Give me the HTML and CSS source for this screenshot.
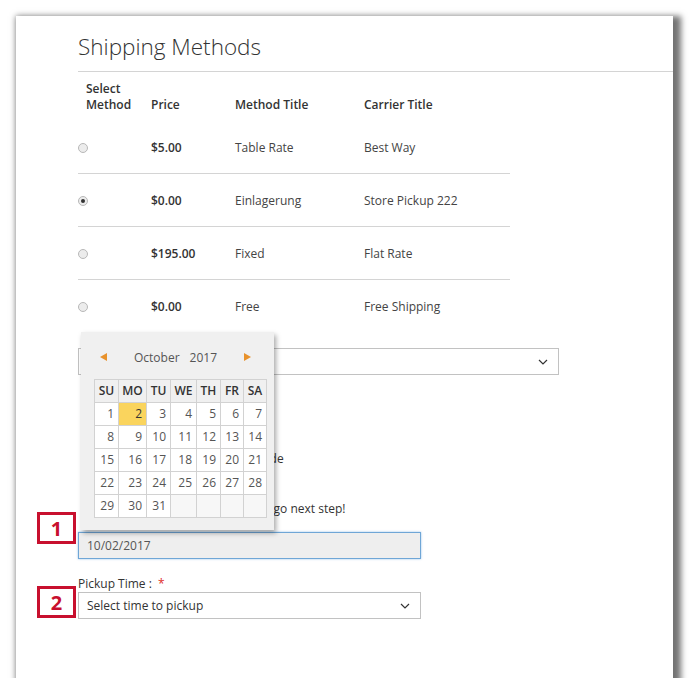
FILE: index.html
```html
<!DOCTYPE html>
<html lang="en">
<head>
<meta charset="utf-8">
<title>Shipping Methods</title>
<link rel="stylesheet" href="styles.css">
</head>
<body>
<div class="panel">
  <h2 class="title">Shipping Methods</h2>
  <div class="rule"></div>
  <div class="content">
    <table class="methods">
      <thead>
        <tr>
          <th class="c-sel">Select<br>Method</th>
          <th class="c-price">Price</th>
          <th class="c-method">Method Title</th>
          <th class="c-carrier">Carrier Title</th>
        </tr>
      </thead>
      <tbody>
        <tr>
          <td><span class="radio"></span></td>
          <td class="price">$5.00</td>
          <td>Table Rate</td>
          <td>Best Way</td>
        </tr>
        <tr>
          <td><span class="radio checked"></span></td>
          <td class="price">$0.00</td>
          <td>Einlagerung</td>
          <td>Store Pickup 222</td>
        </tr>
        <tr>
          <td><span class="radio"></span></td>
          <td class="price">$195.00</td>
          <td>Fixed</td>
          <td>Flat Rate</td>
        </tr>
        <tr>
          <td><span class="radio"></span></td>
          <td class="price">$0.00</td>
          <td>Free</td>
          <td>Free Shipping</td>
        </tr>
      </tbody>
    </table>

    <div class="select store-select">
      <span class="select-text">Store Pickup 222</span>
      <svg class="chev" width="10" height="6" viewBox="0 0 10 6"><polyline points="1,1 5,5 9,1" fill="none" stroke="#333" stroke-width="1.2"/></svg>
    </div>

    <div class="hint code-line">Please bring your order pickup code</div>
    <div class="hint notice">Please select the date and time to go next step!</div>

    <div class="date-input">10/02/2017</div>

    <div class="field-label">Pickup Time : &nbsp;<span class="req">*</span></div>
    <div class="select time-select">
      <span class="select-text">Select time to pickup</span>
      <svg class="chev" width="10" height="6" viewBox="0 0 10 6"><polyline points="1,1 5,5 9,1" fill="none" stroke="#333" stroke-width="1.2"/></svg>
    </div>
  </div>

  <div class="calendar">
    <div class="cal-head">
      <svg class="arrow" width="7" height="8" viewBox="0 0 7 8"><polygon points="7,0 7,8 0,4" fill="#e8922c"/></svg>
      <span class="cal-title"><span>October</span><span>2017</span></span>
      <svg class="arrow" width="7" height="8" viewBox="0 0 7 8"><polygon points="0,0 0,8 7,4" fill="#e8922c"/></svg>
    </div>
    <table class="cal">
      <thead>
        <tr><th class="w1">SU</th><th class="w2">MO</th><th class="w3">TU</th><th class="w4">WE</th><th class="w5">TH</th><th class="w6">FR</th><th class="w7">SA</th></tr>
      </thead>
      <tbody>
        <tr><td>1</td><td class="today">2</td><td>3</td><td>4</td><td>5</td><td>6</td><td>7</td></tr>
        <tr><td>8</td><td>9</td><td>10</td><td>11</td><td>12</td><td>13</td><td>14</td></tr>
        <tr><td>15</td><td>16</td><td>17</td><td>18</td><td>19</td><td>20</td><td>21</td></tr>
        <tr><td>22</td><td>23</td><td>24</td><td>25</td><td>26</td><td>27</td><td>28</td></tr>
        <tr><td>29</td><td>30</td><td>31</td><td class="empty"></td><td class="empty"></td><td class="empty"></td><td class="empty"></td></tr>
      </tbody>
    </table>
  </div>

  <div class="marker m1">1</div>
  <div class="marker m2">2</div>
</div>
</body>
</html>
```
FILE: styles.css
```css
html, body {
  margin: 0;
  padding: 0;
  background: #ffffff;
}
body {
  font-family: "Open Sans", "DejaVu Sans", sans-serif;
  font-size: 12px;
  color: #333;
}
.panel {
  position: relative;
  margin: 16px 0 0 16px;
  width: 657px;
  height: 662px;
  background: #fff;
  box-shadow: 4px 4px 6px 4px rgba(0, 0, 0, 0.55);
  padding-top: 16px;
  box-sizing: border-box;
}
.title {
  margin: 0 0 9px 62px;
  font-size: 22.5px;
  font-weight: 300;
  line-height: 30px;
  color: #333;
}
.rule {
  margin-left: 62px;
  border-top: 1px solid #d4d4d4;
}
.content {
  padding-left: 62px;
}
.methods {
  border-collapse: collapse;
  width: 432px;
  table-layout: fixed;
}
.methods th {
  text-align: left;
  font-weight: 600;
  line-height: 16px;
  padding: 9px 0 8px 0;
  vertical-align: bottom;
  color: #333;
}
.methods th.c-sel { width: 65px; padding-left: 8px; }
.methods th.c-price { width: 84px; }
.methods th.c-method { width: 129px; }
.methods th.c-carrier { width: 146px; }
.methods td {
  height: 50px;
  padding: 2px 0 0 0;
  vertical-align: middle;
  color: #444;
  border-bottom: 1px solid #d4d4d4;
  line-height: 16px;
}
.methods tbody tr:last-child td { border-bottom: none; }
.methods td.price { font-weight: 600; color: #333; }
.radio {
  display: inline-block;
  width: 8px;
  height: 8px;
  border: 1px solid #b8b8b8;
  border-radius: 50%;
  background: #ececec;
  vertical-align: middle;
  position: relative;
  top: -1px;
}
.radio.checked::after {
  content: "";
  position: absolute;
  left: 2px;
  top: 2px;
  width: 4px;
  height: 4px;
  border-radius: 50%;
  background: #333;
}
.select {
  display: flex;
  align-items: center;
  justify-content: space-between;
  height: 27px;
  box-sizing: border-box;
  border: 1px solid #c2c2c2;
  padding: 0 10px 0 8px;
  background: #fff;
}
.store-select {
  margin-top: 16px;
  width: 481px;
}
.select-text { color: #333; }
.hint {
  padding-left: 4px;
  line-height: 18px;
  color: #333;
}
.code-line { margin-top: 75px; }
.notice { margin-top: 32px; }
.field-label {
  line-height: 14px;
  color: #333;
  margin-top: 18px;
  margin-bottom: 1px;
}
.req { color: #e02b27; }
.date-input {
  margin-top: 14px;
  width: 343px;
  height: 27px;
  box-sizing: border-box;
  border: 1px solid #6fa6d6;
  box-shadow: 0 0 2px rgba(80, 150, 220, 0.6);
  background: #eeeeee;
  padding-left: 8px;
  line-height: 25px;
  color: #555;
}
.time-select { width: 343px; }

.calendar {
  position: absolute;
  left: 65px;
  top: 316px;
  width: 193px;
  height: 198px;
  background: #f0f0f0;
  box-shadow: 2px 3px 5px rgba(0, 0, 0, 0.35);
  padding: 13px 13px 0 13px;
  box-sizing: border-box;
}
.cal-head {
  display: flex;
  align-items: center;
  justify-content: space-between;
  height: 24px;
  padding: 0 10px 0 6px;
  margin-bottom: 10px;
}
.cal-title {
  display: flex;
  gap: 10px;
  color: #555;
  font-size: 12px;
}
.cal {
  border-collapse: collapse;
  table-layout: fixed;
  width: 165px;
}
.cal th, .cal td {
  border: 1px solid #d2d2d2;
  height: 22px;
  padding: 0;
  font-size: 12px;
  line-height: 14px;
}
.cal th {
  font-weight: 600;
  text-align: center;
  color: #333;
  background: #f0f0f0;
}
.cal td {
  text-align: right;
  padding-right: 4px;
  background: #fff;
  color: #555;
}
.cal td.today { background: #fad45d; color: #333; }
.cal td.empty { background: #f7f7f7; }
.cal .w1 { width: 23px; }
.cal .w2 { width: 27px; }
.cal .w3 { width: 23px; }
.cal .w4 { width: 25px; }
.cal .w5 { width: 23px; }
.cal .w6 { width: 22px; }
.cal .w7 { width: 22px; }

.marker {
  position: absolute;
  left: 21px;
  width: 39px;
  height: 32px;
  box-sizing: border-box;
  border: 3px solid #c8102e;
  background: #fff;
  color: #c8102e;
  font-size: 20px;
  font-weight: 700;
  display: flex;
  align-items: center;
  justify-content: center;
}
.m1 { top: 496px; }
.m2 { top: 570px; }
```
